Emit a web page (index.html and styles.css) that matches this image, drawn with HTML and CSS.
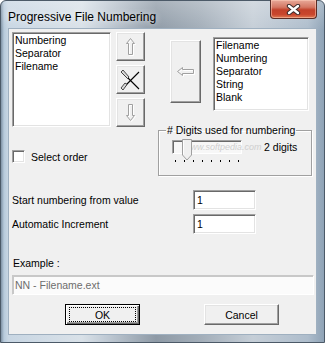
FILE: index.html
```html
<!DOCTYPE html>
<html lang="en">
<head>
    <meta charset="UTF-8">
    <title>Progressive File Numbering</title>
    <link rel="stylesheet" href="styles.css">
</head>
<body>
    <div class="window">
        <div class="titlebar">
            <span class="title">Progressive File Numbering</span>
            <div class="close-btn">
                <svg width="15" height="11" viewBox="0 0 15 11">
                    <path d="M3 2 L12 9 M12 2 L3 9" stroke="#3a2a2a" stroke-width="4.4" stroke-linecap="round"/>
                    <path d="M3 2 L12 9 M12 2 L3 9" stroke="#fff" stroke-width="2.4" stroke-linecap="round"/>
                </svg>
            </div>
        </div>

        <div class="client">
            <div class="top">
                <div class="left-col">
                    <div class="list-row">
                        <div class="listbox list-left">
                            <div>Numbering</div>
                            <div>Separator</div>
                            <div>Filename</div>
                        </div>
                        <div class="btn-col">
                            <button class="btn tool-btn">
                                <svg width="27" height="27" viewBox="0 0 27 27">
                                    <polygon points="14.5,6.5 18.5,11.5 16.5,11.5 16.5,22.5 12.5,22.5 12.5,11.5 10.5,11.5" fill="none" stroke="#fff"/>
                                    <polygon points="13.5,5.5 17.5,10.5 15.5,10.5 15.5,21.5 11.5,21.5 11.5,10.5 9.5,10.5" fill="none" stroke="#a0a0a0"/>
                                </svg>
                            </button>
                            <button class="btn tool-btn">
                                <svg width="27" height="27" viewBox="0 0 27 27">
                                    <path d="M5 6 L22 23" stroke="#000" stroke-width="1.1"/>
                                    <path d="M22 6 L6 22" stroke="#000" stroke-width="1.1"/>
                                    <polygon points="4,6 6,4 12,11 10.5,12.5" fill="#d8d8d8" stroke="#222" stroke-width="0.8"/>
                                    <polygon points="4,22 6,24 10,18.5 8,17" fill="#d8d8d8" stroke="#222" stroke-width="0.8"/>
                                </svg>
                            </button>
                            <button class="btn tool-btn">
                                <svg width="27" height="27" viewBox="0 0 27 27">
                                    <polygon points="14.5,22.5 18.5,17.5 16.5,17.5 16.5,6.5 12.5,6.5 12.5,17.5 10.5,17.5" fill="none" stroke="#fff"/>
                                    <polygon points="13.5,21.5 17.5,16.5 15.5,16.5 15.5,5.5 11.5,5.5 11.5,16.5 9.5,16.5" fill="none" stroke="#a0a0a0"/>
                                </svg>
                            </button>
                        </div>
                    </div>
                    <div class="check-row">
                        <span class="checkbox"></span>
                        <span>Select order</span>
                    </div>
                </div>

                <div class="right-col">
                    <div class="pick-row">
                        <button class="btn add-btn">
                            <svg width="29" height="61" viewBox="0 0 29 61">
                                <polygon points="7.5,31.5 12.5,27.5 12.5,29.5 23.5,29.5 23.5,33.5 12.5,33.5 12.5,35.5" fill="none" stroke="#fff"/>
                                <polygon points="6.5,30.5 11.5,26.5 11.5,28.5 22.5,28.5 22.5,32.5 11.5,32.5 11.5,34.5" fill="none" stroke="#a0a0a0"/>
                            </svg>
                        </button>
                        <div class="listbox list-right">
                            <div>Filename</div>
                            <div>Numbering</div>
                            <div>Separator</div>
                            <div>String</div>
                            <div>Blank</div>
                        </div>
                    </div>

                    <fieldset class="group">
                        <legend># Digits used for numbering</legend>
                        <div class="slider-row">
                            <div class="slider">
                                <div class="track"></div>
                                <span class="watermark">www.softpedia.com</span>
                                <svg class="thumb" width="10" height="22" viewBox="0 0 10 22">
                                    <polygon points="0.5,0.5 9.5,0.5 9.5,16 5,21 0.5,16" fill="#f0f0f0" stroke="#a0a0a0"/>
                                    <path d="M1.5 1.5 V15.5" stroke="#fff"/>
                                </svg>
                                <div class="ticks">
                                    <i></i><i></i><i></i><i></i><i></i><i></i><i></i><i></i>
                                </div>
                            </div>
                            <span class="digits">2 digits</span>
                        </div>
                    </fieldset>
                </div>
            </div>

            <div class="fields">
                <div class="field-row">
                    <span class="field-label">Start numbering from value</span>
                    <div class="edit edit-small">1</div>
                </div>
                <div class="field-row">
                    <span class="field-label">Automatic Increment</span>
                    <div class="edit edit-small">1</div>
                </div>
            </div>

            <div class="example-label">Example :</div>
            <div class="edit edit-wide">NN - Filename.ext</div>

            <div class="dialog-buttons">
                <button class="btn push-btn default"><span class="focus">OK</span></button>
                <button class="btn push-btn">Cancel</button>
            </div>
        </div>
    </div>
</body>
</html>
```

FILE: styles.css
```css
:root {
    --face: #f0f0f0;
    --shadow: #a0a0a0;
    --dark-shadow: #696969;
    --light: #e3e3e3;
    --highlight: #ffffff;
}

* {
    box-sizing: border-box;
}

body {
    margin: 0;
    background: #fff;
    font-family: 'Liberation Sans', Arial, sans-serif;
    font-size: 10.5px;
    color: #000;
}

.window {
    width: 325px;
    height: 343px;
    padding: 0 8px 8px 8px;
    display: flex;
    flex-direction: column;
    border: 1px solid #4c5a68;
    border-radius: 6px 6px 0 0;
    background:
        linear-gradient(180deg, rgba(255, 255, 255, 0.25) 0, rgba(255, 255, 255, 0) 30px),
        linear-gradient(90deg, #7f92a5 0, #b7cadb 3px, #c8d6e3 7px, #d9e1e8 25%, #c2ccd6 32%, #8e9aa6 48%, #a3aeb9 62%, #c5ced7 78%, #aebdcc 95%, #8fa3b6 100%);
}

.titlebar {
    height: 28px;
    display: flex;
    align-items: flex-start;
    justify-content: space-between;
    margin-right: -1px;
}

.title {
    font-size: 12px;
    margin-top: 9px;
    margin-left: -1px;
    color: #000;
    text-shadow: 0 0 6px rgba(255, 255, 255, 0.9);
}

.close-btn {
    width: 47px;
    height: 19px;
    margin-top: -1px;
    display: flex;
    align-items: center;
    justify-content: center;
    border: 1px solid #5b2c25;
    border-top: none;
    border-radius: 0 0 4px 4px;
    background: linear-gradient(180deg, #e8a999 0, #d47763 40%, #c2412a 55%, #c9462d 80%, #de7a54 100%);
    box-shadow: inset 0 0 0 1px rgba(255, 210, 190, 0.5);
}

.client {
    flex: 1;
    background: var(--face);
    padding: 3px 4px 0 3px;
    box-shadow: 0 0 0 1px #9fb0c0;
}

/* 3D borders */
.btn {
    font: inherit;
    padding: 0;
    margin: 0;
    background: var(--face);
    border: 1px solid;
    border-color: var(--highlight) var(--dark-shadow) var(--dark-shadow) var(--highlight);
    box-shadow: inset -1px -1px 0 var(--shadow), inset 1px 1px 0 var(--light);
    display: flex;
    align-items: center;
    justify-content: center;
    color: #000;
}

.listbox,
.edit,
.checkbox {
    background: #fff;
    border: 1px solid;
    border-color: var(--shadow) var(--highlight) var(--highlight) var(--shadow);
    box-shadow: inset 1px 1px 0 var(--dark-shadow), inset -1px -1px 0 var(--light);
}

.top {
    display: flex;
    height: 141px;
}

.left-col {
    width: 147px;
}

.list-row {
    display: flex;
}

.listbox {
    padding: 1px 2px;
    line-height: 13px;
}

.list-left {
    width: 99px;
    height: 95px;
}

.btn-col {
    margin-left: 5px;
    display: flex;
    flex-direction: column;
    gap: 4px;
}

.tool-btn {
    width: 29px;
    height: 29px;
}

.check-row {
    margin-top: 23px;
    display: flex;
    align-items: center;
    gap: 6px;
}

.checkbox {
    width: 13px;
    height: 13px;
}

.right-col {
    width: 155px;
}

.pick-row {
    display: flex;
    height: 92px;
}

.add-btn {
    width: 31px;
    height: 63px;
    margin-left: 12px;
    margin-top: 8px;
}

.list-right {
    width: 96px;
    height: 74px;
    margin-left: 12px;
    margin-top: 5px;
}

.group {
    margin: 0;
    padding: 0;
    height: 52px;
    border: 1px solid var(--shadow);
    box-shadow: 1px 1px 0 #fff, inset 1px 1px 0 #fff;
}

.group legend {
    margin-left: 7px;
    padding: 0 1px;
    line-height: 13px;
}

.slider-row {
    display: flex;
    align-items: flex-start;
    margin-top: 3px;
    margin-left: 13px;
}

.slider {
    position: relative;
    width: 71px;
}

.track {
    width: 70px;
    height: 14px;
    background: #f7f7f7;
    border: 1px solid;
    border-color: var(--shadow) var(--highlight) var(--highlight) var(--shadow);
    box-shadow: inset 1px 1px 0 var(--dark-shadow);
}

/* faint overlay stamped over the capture */
.watermark {
    position: absolute;
    left: 12px;
    top: 1px;
    color: #cfcfcf;
    font-style: italic;
    font-size: 9px;
    line-height: 13px;
    white-space: nowrap;
}

.thumb {
    position: absolute;
    left: 10px;
    top: -1px;
}

.ticks {
    display: flex;
    gap: 8px;
    margin-top: 6px;
    margin-left: 3px;
}

.ticks i {
    width: 1px;
    height: 2px;
    background: #000;
}

.digits {
    margin-left: 21px;
    line-height: 13px;
    margin-top: 1px;
}

.fields {
    margin-top: 17px;
    display: flex;
    flex-direction: column;
    gap: 4px;
}

.field-row {
    display: flex;
    align-items: center;
}

.field-label {
    width: 181px;
}

.edit {
    padding: 0 3px;
    height: 20px;
    line-height: 18px;
}

.edit-small {
    width: 63px;
}

.example-label {
    margin-top: 23px;
    line-height: 13px;
    padding-left: 1px;
}

.edit-wide {
    margin-top: 5px;
    width: 302px;
    color: #6d6d6d;
    background: #fbfbfb;
    box-shadow: inset 1px 1px 0 #c8c8c8;
    border-color: #c8c8c8 #fff #fff #c8c8c8;
    padding-left: 2px;
}

.dialog-buttons {
    display: flex;
    margin-top: 9px;
    padding-left: 53px;
    gap: 64px;
}

.push-btn {
    width: 75px;
    height: 21px;
}

.push-btn.default {
    border: 1px solid #000;
    box-shadow: inset 1px 1px 0 #fff, inset -1px -1px 0 var(--dark-shadow), inset -2px -2px 0 var(--shadow);
}

.focus {
    width: 67px;
    height: 15px;
    border: 1px dotted #000;
    display: flex;
    align-items: center;
    justify-content: center;
}
```
